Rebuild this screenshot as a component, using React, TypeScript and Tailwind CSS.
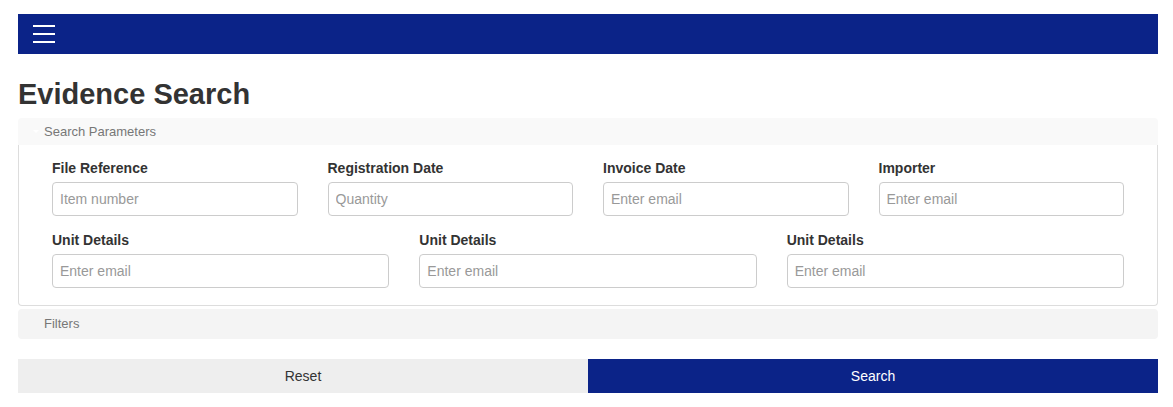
import React from "react";

const row1 = [
  { label: "File Reference", placeholder: "Item number" },
  { label: "Registration Date", placeholder: "Quantity" },
  { label: "Invoice Date", placeholder: "Enter email" },
  { label: "Importer", placeholder: "Enter email" },
];

const row2 = [
  { label: "Unit Details", placeholder: "Enter email" },
  { label: "Unit Details", placeholder: "Enter email" },
  { label: "Unit Details", placeholder: "Enter email" },
];

const Field = ({ label, placeholder }: { label: string; placeholder: string }) => (
  <div className="flex flex-col">
    <label className="text-[14px] leading-[20px] font-bold text-[#333] mb-[4px]">{label}</label>
    <input
      type="text"
      placeholder={placeholder}
      className="h-[34px] w-full rounded-[4px] border border-[#ccc] px-[7px] text-[14px] text-[#333] placeholder:text-[#999] outline-none"
    />
  </div>
);

export default function App() {
  return (
    <div className="min-h-[407px] bg-white pl-[18px] pr-[15px] pt-[14px] font-[family-name:'Liberation_Sans',Arial,sans-serif]">
      {/* Top bar */}
      <nav className="h-[40px] bg-[#0b2388] flex items-center px-[15px]">
        <button className="flex flex-col gap-[6px] w-[22px]">
          <span className="block h-[2px] w-full bg-white"></span>
          <span className="block h-[2px] w-full bg-white"></span>
          <span className="block h-[2px] w-full bg-white"></span>
        </button>
      </nav>

      <h1 className="mt-[23px] text-[29px] leading-[34px] font-bold text-[#333]">Evidence Search</h1>

      {/* Search parameters panel */}
      <div className="mt-[7px]">
        <div className="h-[27px] bg-[#f9f9f9] flex items-center pl-[15px] rounded-t-[4px]">
          <span className="w-0 h-0 border-l-[3px] border-r-[3px] border-t-[3px] border-l-transparent border-r-transparent border-t-white mr-[5px]"></span>
          <span className="text-[13px] text-[#777]">Search Parameters</span>
        </div>
        <div className="border border-t-0 border-[#ddd] rounded-b-[4px] px-[33px] pt-[13px] pb-[17px]">
          <div className="grid grid-cols-4 gap-x-[30px]">
            {row1.map((f, i) => (
              <Field key={i} {...f} />
            ))}
          </div>
          <div className="grid grid-cols-3 gap-x-[30px] mt-[14px]">
            {row2.map((f, i) => (
              <Field key={i} {...f} />
            ))}
          </div>
        </div>
      </div>

      {/* Filters */}
      <div className="mt-[3px] h-[30px] bg-[#f4f4f4] rounded-[4px] flex items-center pl-[26px]">
        <span className="text-[13px] text-[#777]">Filters</span>
      </div>

      {/* Actions */}
      <div className="mt-[20px] flex h-[34px]">
        <button className="flex-1 bg-[#eee] text-[14px] text-[#333]">Reset</button>
        <button className="flex-1 bg-[#0b2388] text-[14px] text-white">Search</button>
      </div>
    </div>
  );
}
